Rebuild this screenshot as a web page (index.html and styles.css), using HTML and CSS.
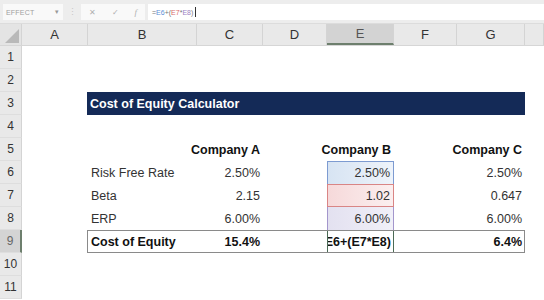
FILE: index.html
```html
<!DOCTYPE html>
<html>
<head>
<meta charset="utf-8">
<link rel="stylesheet" href="styles.css">
</head>
<body>
<div class="toolbar">
  <div class="namebox"><span class="nm">EFFECT</span><span class="caret">▾</span></div>
  <div class="grip">⋮</div>
  <div class="icons"><span class="ic">✕</span><span class="ic">✓</span><span class="ic fx">f</span></div>
  <div class="formula"><span>=</span><span class="fb">E6</span><span>+(</span><span class="fr">E7</span><span>*</span><span class="fp">E8</span><span>)</span><span class="cursor"></span></div>
</div>
<div class="sheet">
  <div class="row hdr">
    <div class="corner"><span class="tri"></span></div>
    <div class="ch">A</div><div class="ch">B</div><div class="ch">C</div><div class="ch">D</div><div class="ch sel">E</div><div class="ch">F</div><div class="ch">G</div><div class="ch"></div>
  </div>
  <div class="row"><div class="rh">1</div></div>
  <div class="row"><div class="rh">2</div></div>
  <div class="row"><div class="rh">3</div><div class="title">Cost of Equity Calculator</div></div>
  <div class="row"><div class="rh">4</div></div>
  <div class="row"><div class="rh">5</div>
    <div class="c cC num bold">Company A</div>
    <div class="c cE num bold">Company B</div>
    <div class="c cG num bold">Company C</div>
  </div>
  <div class="row"><div class="rh">6</div>
    <div class="c cB">Risk Free Rate</div>
    <div class="c cC num">2.50%</div>
    <div class="c cE num ref blue">2.50%</div>
    <div class="c cG num">2.50%</div>
  </div>
  <div class="row"><div class="rh">7</div>
    <div class="c cB">Beta</div>
    <div class="c cC num">2.15</div>
    <div class="c cE num ref red">1.02</div>
    <div class="c cG num">0.647</div>
  </div>
  <div class="row"><div class="rh">8</div>
    <div class="c cB">ERP</div>
    <div class="c cC num">6.00%</div>
    <div class="c cE num ref purple">6.00%</div>
    <div class="c cG num">6.00%</div>
  </div>
  <div class="row"><div class="rh rsel">9</div>
    <div class="total">
      <div class="c tB bold">Cost of Equity</div>
      <div class="c tC num bold">15.4%</div>
      <div class="c tD"></div>
      <div class="c tE num bold active"><span class="clip">=E6+(E7*E8)</span></div>
      <div class="c tF"></div>
      <div class="c tG num bold">6.4%</div>
    </div>
  </div>
  <div class="row"><div class="rh">10</div></div>
  <div class="row"><div class="rh">11</div></div>
</div>
</body>
</html>
```
FILE: styles.css
```css
* { box-sizing: border-box; }
html, body { margin: 0; padding: 0; background: #fff; }
body {
  width: 544px; height: 300px; overflow: hidden;
  font-family: "Liberation Sans", Arial, sans-serif;
  color: #222;
}
.toolbar {
  height: 24px;
  background: #ededed;
  display: flex;
  align-items: center;
  padding: 4px 0 3px 3px;
  border-bottom: 1px solid #dcdcdc;
  gap: 3px;
}
.namebox {
  width: 60px; height: 16px;
  background: #f9f9f9;
  display: flex; align-items: center; justify-content: space-between;
  padding: 0 4px 0 3px;
  font-size: 7px; color: #a0a0a0; letter-spacing: 0.2px;
}
.caret { font-size: 7px; color: #999; }
.grip { width: 12px; text-align: center; color: #c8c8c8; font-size: 9px; }
.icons {
  width: 64px; height: 16px; background: #f9f9f9;
  display: flex; align-items: center; justify-content: space-around;
  color: #b0b0b0; font-size: 8px;
}
.fx { font-style: italic; font-family: "Liberation Serif", serif; font-size: 9px; }
.formula {
  flex: 1; height: 16px; background: #fff;
  display: flex; align-items: center;
  padding-left: 4px;
  font-size: 7px; color: #777;
}
.fb { color: #5b8ed6; }
.fr { color: #d96a6a; }
.fp { color: #9b7fc4; }
.cursor { display: inline-block; width: 1px; height: 10px; background: #333; margin-left: 2px; }

.sheet { display: flex; flex-direction: column; }
.row {
  display: grid;
  grid-template-columns: 22px 66px 109px 66px 64px 67px 63px 68px 19px;
  height: 23px;
  font-size: 12.5px;
}
.row.hdr { height: 22px; background: #e9e9e9; border-bottom: 1px solid #d6d6d6; }
.corner { position: relative; background: #e4e4e4; border-right: 1px solid #d4d4d4; }
.tri {
  position: absolute; right: 2px; bottom: 2px;
  width: 0; height: 0;
  border-left: 14px solid transparent;
  border-bottom: 14px solid #b9b9b9;
}
.ch {
  display: flex; align-items: center; justify-content: center;
  font-size: 13px; color: #333;
  border-right: 1px solid #d4d4d4;
}
.ch.sel { background: #d3d3d3; border-bottom: 2px solid #6d7f6d; color: #555; }
.rh {
  grid-column: 1;
  background: #e9e9e9;
  border-right: 1px solid #d4d4d4;
  border-bottom: 1px solid #dedede;
  display: flex; align-items: center; justify-content: center;
  font-size: 12px; color: #333;
}
.rh.rsel { background: #d4d4d4; border-right: 2px solid #6d7f6d; color: #666; }
.title {
  grid-column: 3 / 9;
  background: #142a57;
  color: #fff;
  font-weight: bold;
  display: flex; align-items: center;
  padding-left: 3px;
  font-size: 12.5px;
  margin-left: -1px;
}
.c {
  display: flex; align-items: center;
  padding: 0 3px;
  white-space: nowrap;
  color: #333;
}
.bold { font-weight: bold; color: #111; }
.num { justify-content: flex-end; }
.cB { grid-column: 3; }
.cC { grid-column: 4; }
.cE { grid-column: 6; }
.cG { grid-column: 8; }
.ref { border: 1px solid; }
.blue { background: linear-gradient(90deg, #d7e4f3, #eef3fa); border-color: #7d9bd1; border-bottom: none; }
.red { background: linear-gradient(90deg, #f6d9da, #fbefef); border-color: #d98585; }
.purple { background: linear-gradient(90deg, #e3e1f0, #f1f0f8); border-color: #a396cc; border-top: none; border-bottom: none; }
.total {
  grid-column: 3 / 9;
  display: grid;
  grid-template-columns: 109px 66px 64px 67px 63px 68px;
  border: 1px solid #8a8a8a;
  margin-left: -1px;
}
.active {
  overflow: hidden;
  border-left: 1px solid #4b6a55; border-right: 1px solid #4b6a55;
  justify-content: flex-end; padding-right: 2px;
}
.clip { color: #111; }
```
